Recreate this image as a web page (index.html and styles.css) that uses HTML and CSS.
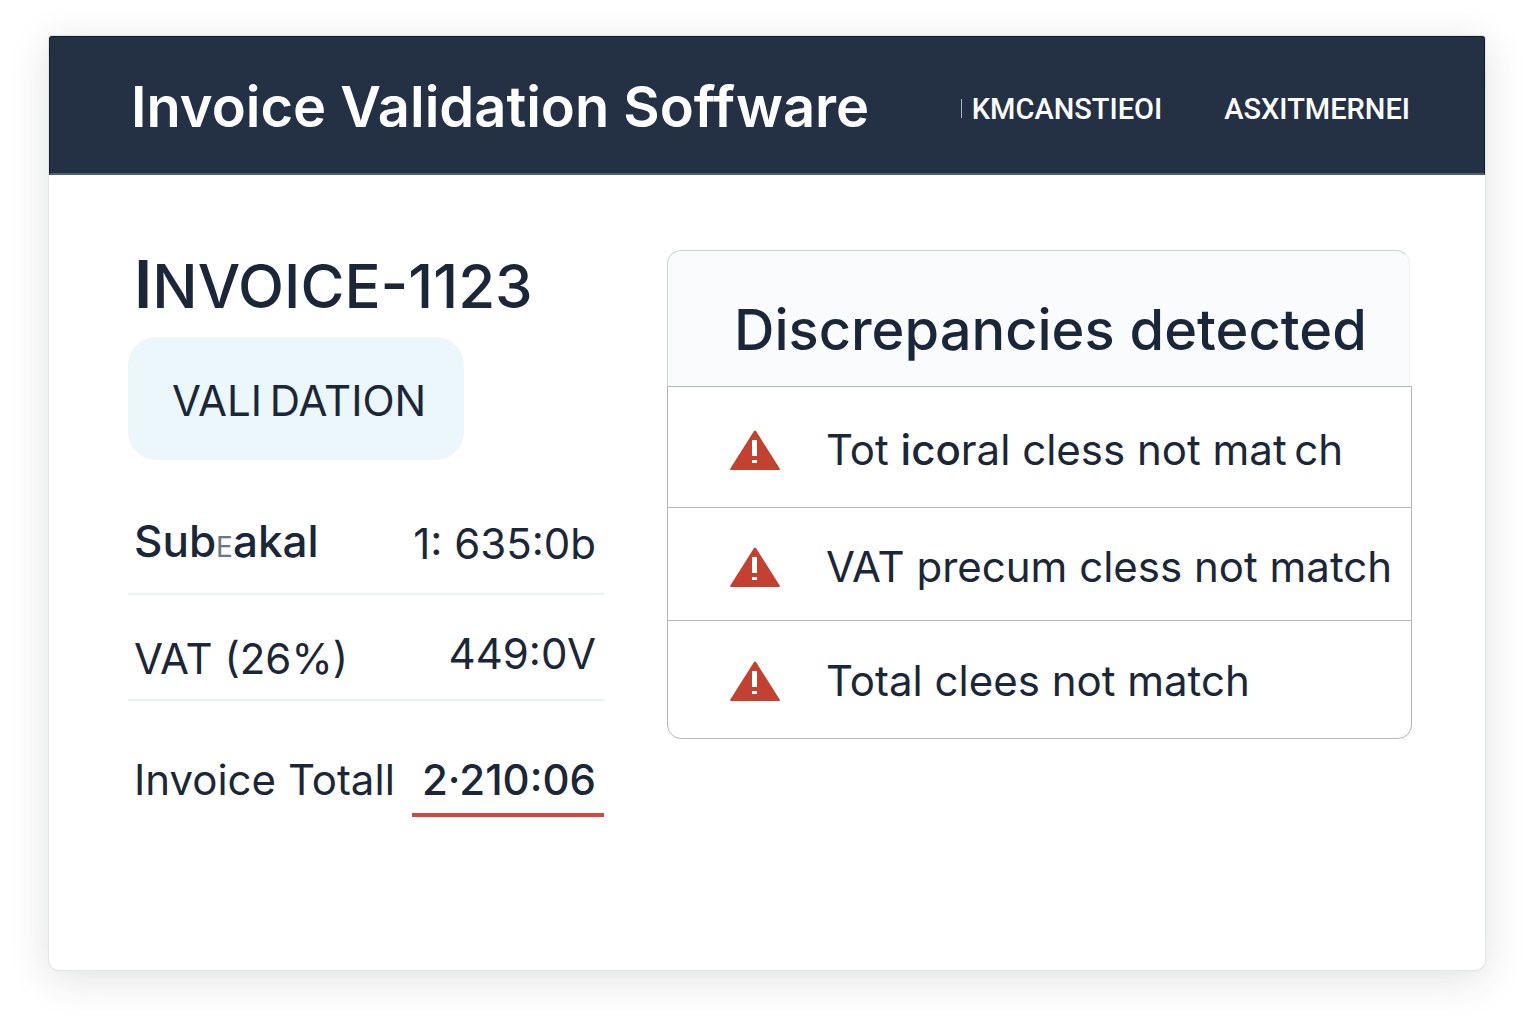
FILE: index.html
```html
<!DOCTYPE html>
<html lang="en">
<head>
  <meta charset="utf-8">
  <title>Invoice Validation Soffware</title>
  <link rel="stylesheet" href="styles.css">
</head>
<body>
  <div class="window">
    <header class="topbar">
      <h1>Invoice Validation Soffware</h1>
      <nav>
        <a href="#">KMCANSTIEOI</a>
        <a href="#">ASXITMERNEI</a>
      </nav>
    </header>

    <main>
      <section class="invoice">
        <h2>INVOICE-1123</h2>
        <button class="status" type="button">VALI&thinsp;DATION</button>
        <table>
          <tbody>
            <tr class="subtotal">
              <th scope="row">Sub<small>E</small>akal</th>
              <td>1: 635:0b</td>
            </tr>
            <tr class="vat">
              <th scope="row">VAT (26%)</th>
              <td>449:0V</td>
            </tr>
            <tr class="total">
              <th scope="row">Invoice Totall</th>
              <td><span>2·210:06</span></td>
            </tr>
          </tbody>
        </table>
      </section>

      <section class="discrepancies">
        <h2>Discrepancies detected</h2>
        <ul>
          <li>
            <svg class="warning" viewBox="0 0 50 41" aria-hidden="true">
              <path class="tri" d="M24 1 Q25 0 26 1 L50 39 Q50 40 49 40 H1 Q0 40 0 39 Z"/>
              <path class="mark" d="M22 10h5v16h-5z M22 30h5v3h-5z"/>
            </svg>
            <span>Tot <b>ico</b>ral cless not mat&thinsp;ch</span>
          </li>
          <li>
            <svg class="warning" viewBox="0 0 50 41" aria-hidden="true">
              <path class="tri" d="M24 1 Q25 0 26 1 L50 39 Q50 40 49 40 H1 Q0 40 0 39 Z"/>
              <path class="mark" d="M22 10h5v16h-5z M22 30h5v3h-5z"/>
            </svg>
            <span>VAT precum cless not match</span>
          </li>
          <li>
            <svg class="warning" viewBox="0 0 50 41" aria-hidden="true">
              <path class="tri" d="M24 1 Q25 0 26 1 L50 39 Q50 40 49 40 H1 Q0 40 0 39 Z"/>
              <path class="mark" d="M22 10h5v16h-5z M22 30h5v3h-5z"/>
            </svg>
            <span>Total clees not match</span>
          </li>
        </ul>
      </section>
    </main>
  </div>
</body>
</html>
```
FILE: styles.css
```css
* {
  box-sizing: border-box;
}
body {
  margin: 0;
  padding: 36px 51px 54px 49px;
  min-height: 100vh;
  display: flex;
  background: #fff;
  color: #1b2738;
  font-family: Inter, "Liberation Sans", sans-serif;
}
h1, h2, ul {
  margin: 0;
  padding: 0;
}
.window {
  flex: 1;
  background: #fff;
  border-radius: 3px 3px 10px 10px;
  box-shadow: 0 0 1px 1px #e2e5e5, 0 8px 40px rgba(40, 50, 50, 0.15);
}

/* top bar */
.topbar {
  display: flex;
  align-items: center;
  justify-content: space-between;
  padding: 33px 74px 29px 81px;
  background: #243144;
  border: 1px solid #101c2c;
  border-bottom: 2px solid #4c6078;
  border-radius: 3px 3px 0 0;
  color: #fff;
}
.topbar h1 {
  font-size: 56px;
  line-height: 74px;
  font-weight: 600;
}
nav {
  display: flex;
  align-items: center;
  gap: 62px;
  padding-top: 3px;
}
nav::before {
  content: "";
  width: 1px;
  height: 19px;
  margin-right: -52px;
  background: #aab3bd;
}
nav a {
  color: #fff;
  font-family: Roboto, sans-serif;
  font-size: 29px;
  font-weight: 500;
  text-decoration: none;
}

main {
  display: grid;
  grid-template-columns: 476fr 745fr;
  gap: 63px;
  align-items: start;
  padding: 75px 73px 75px 79px;
}

/* invoice */
.invoice h2 {
  padding-left: 6px;
  font-size: 60px;
  line-height: 68px;
  font-weight: 500;
}
.invoice h2::first-letter {
  font-size: 66px;
  font-weight: 600;
}
.status {
  display: block;
  margin: 17px 0 0;
  padding: 39px 38px 34px 44px;
  border: 0;
  border-radius: 28px;
  background: #ebf7fb;
  color: inherit;
  font-family: inherit;
  font-size: 42px;
  line-height: 50px;
}
.invoice table {
  width: 100%;
  margin-top: 26px;
  border-collapse: collapse;
}
th, td {
  padding: 0 8px 0 6px;
  font-size: 42px;
  line-height: 50px;
  font-weight: 400;
  text-align: left;
  white-space: nowrap;
}
td {
  text-align: right;
}
.subtotal, .vat {
  border-bottom: 2px solid #e9f1f4;
}
.subtotal th, .subtotal td {
  padding-top: 30px;
  padding-bottom: 21px;
}
.subtotal th {
  font-size: 44px;
  font-weight: 500;
}
.subtotal small {
  font-size: 28px;
  font-weight: 400;
  color: #6d7683;
}
.vat th {
  padding-top: 39px;
  padding-bottom: 15px;
}
.vat td {
  padding-top: 34px;
  padding-bottom: 20px;
}
.total th, .total td {
  padding-top: 54px;
  padding-right: 0;
  padding-bottom: 12px;
}
.total span {
  display: inline-block;
  padding: 0 8px 8px 10px;
  border-bottom: 4px solid #d24a3d;
  font-weight: 500;
}
.total th {
  vertical-align: top;
}

/* discrepancies */
.discrepancies h2 {
  margin-right: 2px;
  padding: 44px 20px 21px 66px;
  background: #f9fbfd;
  border: 1px solid #cfd3d6;
  border-right-color: #eef0f2;
  border-bottom: 0;
  border-radius: 14px 14px 0 0;
  font-size: 56px;
  line-height: 70px;
  font-weight: 500;
  white-space: nowrap;
}
.discrepancies ul {
  border: 1px solid #b4b7ba;
  border-radius: 0 0 14px 14px;
  list-style: none;
}
.discrepancies li {
  display: flex;
  align-items: center;
  gap: 46px;
  padding: 34px 10px 28px 62px;
  font-size: 42px;
  line-height: 50px;
  white-space: nowrap;
}
.discrepancies li:first-child {
  padding-top: 38px;
  padding-bottom: 32px;
}
.discrepancies li:last-child {
  padding-top: 35px;
  padding-bottom: 32px;
}
.discrepancies li + li {
  border-top: 1px solid #b4b7ba;
}
.discrepancies b {
  font-weight: 500;
}
.warning {
  flex: none;
  width: 50px;
  height: 41px;
}
.tri {
  fill: #c24130;
}
.mark {
  fill: #fff;
}
```
